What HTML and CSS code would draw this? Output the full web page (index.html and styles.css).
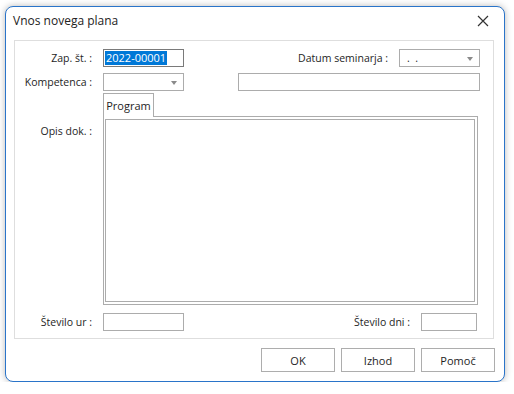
FILE: index.html
```html
<!DOCTYPE html>
<html>
<head>
<meta charset="utf-8">
<link rel="stylesheet" href="styles.css">
</head>
<body>
<div class="window">
  <div class="titlebar">
    <span class="title">Vnos novega plana</span>
    <svg class="close" width="12" height="12" viewBox="0 0 12 12"><path d="M1 1 L11 11 M11 1 L1 11" stroke="#333" stroke-width="1.2" fill="none"/></svg>
  </div>
  <div class="content">
    <div class="group">
      <div class="row">
        <div class="label">Zap. št. :</div>
        <div class="field w81 focused"><span class="sel">2022-00001</span></div>
        <div class="spacer"></div>
        <div class="label-r">Datum seminarja :</div>
        <div class="field w81 combo"><span class="dots">.&nbsp;&nbsp;.</span><span class="arrow"></span></div>
      </div>
      <div class="row row2">
        <div class="label">Kompetenca :</div>
        <div class="field w81 combo"><span class="arrow"></span></div>
        <div class="field wide"></div>
      </div>
      <div class="tabrow">
        <div class="label opis">Opis dok. :</div>
        <div class="tabs">
          <div class="tab">Program</div>
          <div class="tabbox"><div class="tabinner"></div></div>
        </div>
      </div>
      <div class="row row-bottom">
        <div class="label">Število ur :</div>
        <div class="field w81"></div>
        <div class="spacer"></div>
        <div class="label-r">Število dni :</div>
        <div class="field w56"></div>
      </div>
    </div>
    <div class="buttons">
      <div class="btn">OK</div>
      <div class="btn">Izhod</div>
      <div class="btn">Pomoč</div>
    </div>
  </div>
</div>
</body>
</html>
```
FILE: styles.css
```css
html, body {
  margin: 0;
  padding: 0;
  background: #ffffff;
}
body {
  font-family: "Open Sans", "Noto Sans", sans-serif;
  font-size: 10.5px;
  color: #1e1e1e;
}
.window {
  margin: 6px 0 0 5px;
  width: 498px;
  height: 374px;
  border: 1px solid #2a74c9;
  border-radius: 8px;
  background: #ffffff;
  box-shadow: 0 0 7px rgba(0, 0, 0, 0.28);
}
.titlebar {
  height: 27px;
  display: flex;
  align-items: center;
  justify-content: space-between;
  padding: 0 15px 0 7px;
  margin-bottom: 6px;
}
.title {
  font-size: 12px;
  color: #222;
}
.close {
  display: block;
  margin-top: 1px;
}
.content {
  padding: 0 10px 0 8px;
}
.group {
  border: 1px solid #dedede;
  height: 299px;
  box-sizing: border-box;
  padding: 8px 13px 0 0;
  display: flex;
  flex-direction: column;
}
.row {
  display: flex;
  align-items: center;
  height: 18px;
}
.row2 {
  margin-top: 6px;
}
.label {
  width: 77px;
  text-align: right;
  margin-right: 11px;
  white-space: nowrap;
}
.label-r {
  margin-right: 11px;
  white-space: nowrap;
}
.spacer {
  flex: 1;
}
.field {
  height: 18px;
  box-sizing: border-box;
  border: 1px solid #acacac;
  background: #fff;
  display: flex;
  align-items: center;
  position: relative;
}
.w81 { width: 81px; }
.w56 { width: 56px; margin-right: 3px; }
.wide {
  width: 242px;
  margin-left: 54px;
}
.focused {
  border-color: #7a7a7a;
  padding-left: 1px;
}
.sel {
  background: #0078d7;
  color: #fff;
  line-height: 14px;
  padding: 0 1px;
  font-size: 11px;
}
.dots {
  padding-left: 7px;
}
.arrow {
  position: absolute;
  right: 6px;
  top: 7px;
  width: 0;
  height: 0;
  border-left: 3.5px solid transparent;
  border-right: 3.5px solid transparent;
  border-top: 4px solid #8a8a8a;
}
.tabrow {
  display: flex;
  margin-top: 2px;
}
.opis {
  padding-top: 31px;
  align-self: flex-start;
}
.tabs {
  display: flex;
  flex-direction: column;
}
.tab {
  width: 51px;
  height: 24px;
  box-sizing: border-box;
  border: 1px solid #acacac;
  border-bottom: none;
  background: #fff;
  text-align: center;
  line-height: 23px;
  position: relative;
  z-index: 1;
  margin-bottom: -1px;
  font-size: 11px;
}
.tabbox {
  width: 375px;
  height: 189px;
  box-sizing: border-box;
  border: 1px solid #acacac;
  padding: 2px 2px 2px 1px;
}
.tabinner {
  width: 100%;
  height: 100%;
  box-sizing: border-box;
  border: 1px solid #acacac;
}
.row-bottom {
  margin-top: 8px;
}
.buttons {
  display: flex;
  justify-content: flex-end;
  gap: 6px;
  margin-top: 9px;
  margin-right: -1px;
}
.btn {
  width: 74px;
  height: 24px;
  box-sizing: border-box;
  border: 1px solid #adadad;
  background: #fff;
  display: flex;
  align-items: center;
  justify-content: center;
  font-size: 11px;
}
```
